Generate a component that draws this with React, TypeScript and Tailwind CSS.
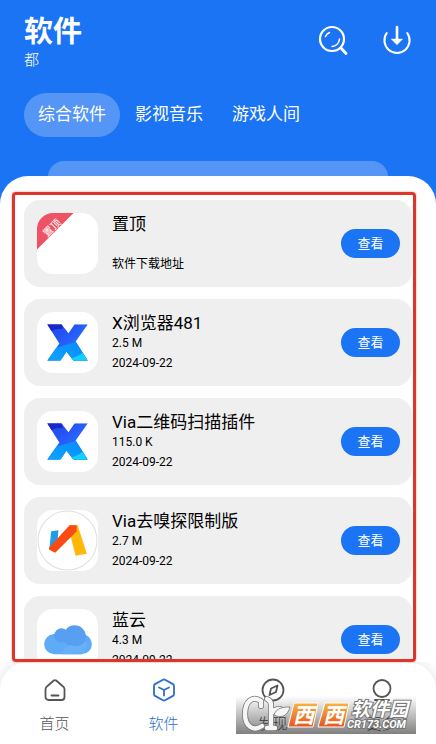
import React, { useState } from 'react';
import clsx from 'clsx';

interface AppItem {
    name: string;
    size?: string;
    note: string;
    icon: React.ReactNode;
}

const XBrowserIcon = ({ id }: { id: string }) => (
    <svg viewBox="0 0 60 60" className="w-full h-full" aria-hidden="true">
        <defs>
            <linearGradient id={`${id}-top`} x1="0" y1="0" x2="1" y2="1">
                <stop offset="0.3" stopColor="#2350f2" />
                <stop offset="0.6" stopColor="#2a68ff" />
                <stop offset="1" stopColor="#2043dc" />
            </linearGradient>
            <linearGradient id={`${id}-bottom`} x1="0" y1="1" x2="1" y2="0">
                <stop offset="0" stopColor="#0ba8ff" />
                <stop offset="1" stopColor="#0a84fa" />
            </linearGradient>
            <clipPath id={`${id}-clip`}>
                <path d="M10 12h14l7 9 6-9h13L38 29l12 19H36l-7-9-6 9H10l12-17z" />
            </clipPath>
        </defs>
        <g clipPath={`url(#${id}-clip)`}>
            <path d="M8 10h44v40H8z" fill={`url(#${id}-top)`} />
            <path d="M8 10h17v7c-4-1-9 0-13 3z" fill="#1b28c6" />
            <path d="M8 35h12c7-3 14-3 22-8l12 23H8z" fill={`url(#${id}-bottom)`} />
            <path d="M33 46c5-2 8-3 12-6l7 10H33z" fill="#12cffd" />
        </g>
    </svg>
);

const ViaIcon = () => (
    <svg viewBox="0 0 60 60" className="w-full h-full" aria-hidden="true">
        <circle cx="30" cy="30" r="29" fill="#fff" stroke="#dedede" />
        <path d="M14 21l7-1-1 14-8 5z" fill="#1c9fe8" />
        <path d="M32 15h8l9 28-11 2-7-27z" fill="#ffb70a" />
        <path d="M12 37l20-22h7v6L18 42l-6-3z" fill="#fb4a13" />
    </svg>
);

const CloudIcon = () => (
    <svg viewBox="0 0 60 60" className="w-full h-full" aria-hidden="true">
        <path d="M17 44.500a10 10 0 0 1 0-20h27a10 10 0 0 1 0 20z" fill="#5fabf6" />
        <circle cx="24" cy="26" r="7" fill="#579ff0" />
        <circle cx="37" cy="27" r="11" fill="#579ff0" />
        <path d="M25 44.500a11 11 0 0 1 8-9c6 2 11 1 15-4a11 11 0 0 1-4 13z" fill="#68b1f9" />
    </svg>
);

const PinnedRibbon = () => (
    <svg viewBox="0 0 60 60" className="w-full h-full" aria-hidden="true">
        <path d="M0 0h36L0 36z" fill="#ee5264" />
        <text x="15" y="18" transform="rotate(-45 15 15)" textAnchor="middle" fontSize="10" fill="#fff">置顶</text>
    </svg>
);

const SearchIcon = () => (
    <svg viewBox="0 0 28 28" className="size-7 overflow-visible" fill="none" stroke="currentColor" strokeLinecap="round" aria-hidden="true">
        <circle cx="13" cy="13" r="12" strokeWidth="2.200" />
        <path d="M22 22l5 5.500" strokeWidth="2.800" />
        <path d="M6.500 10.500a7 7 0 0 1 4-4M20.500 13a8 8 0 0 1-7.500 7.500" strokeWidth="1.500" />
    </svg>
);

const DownloadIcon = () => (
    <svg viewBox="0 0 30 28" className="w-7 h-7 overflow-visible" fill="none" stroke="currentColor" strokeLinecap="round" aria-hidden="true">
        <path d="M4 6.500a13.500 13.500 0 1 0 22 0" strokeWidth="2.200" />
        <path d="M15 0v14" strokeWidth="2.800" />
        <path d="M9 13h12l-6 6z" fill="currentColor" strokeWidth="0.500" />
    </svg>
);

const navIcons = {
    home: (
        <>
            <path d="M4.500 8L10.800 2.500a2 2 0 0 1 2.400 0L19.500 8a4 4 0 0 1 2 3v8a3 3 0 0 1-3 3h-13a3 3 0 0 1-3-3v-8a4 4 0 0 1 2-3z" />
            <path d="M8.500 17.500h7" />
        </>
    ),
    box: (
        <>
            <path d="M11 1.700a2 2 0 0 1 2 0l8 4.400a2 2 0 0 1 1 1.700v8.400a2 2 0 0 1-1 1.700L13 22.300a2 2 0 0 1-2 0l-8-4.400a2 2 0 0 1-1-1.700V7.800a2 2 0 0 1 1-1.700z" />
            <path d="M7 9.500l5 2.500 5-2.500M12 12v5.500" />
        </>
    ),
    compass: (
        <>
            <circle cx="12" cy="12" r="10.500" />
            <path d="M16.500 7.500l-1.500 6.500-6.500 3 1.500-6.500z" />
        </>
    ),
    user: (
        <>
            <circle cx="12" cy="10.500" r="8.500" />
            <path d="M5 22h14" />
        </>
    )
};

const apps: AppItem[] = [
    { name: '置顶', note: '软件下载地址', icon: <PinnedRibbon /> },
    { name: 'X浏览器481', size: '2.5 M', note: '2024-09-22', icon: <XBrowserIcon id="xb" /> },
    { name: 'Via二维码扫描插件', size: '115.0 K', note: '2024-09-22', icon: <XBrowserIcon id="scan" /> },
    { name: 'Via去嗅探限制版', size: '2.7 M', note: '2024-09-22', icon: <ViaIcon /> },
    { name: '蓝云', size: '4.3 M', note: '2024-09-22', icon: <CloudIcon /> }
];

const tabs = ['综合软件', '影视音乐', '游戏人间'];

const navItems = [
    { label: '首页', icon: navIcons.home },
    { label: '软件', icon: navIcons.box },
    { label: '发现', icon: navIcons.compass },
    { label: '更多', icon: navIcons.user }
];

const AppCard = ({ app }: { app: AppItem }) => (
    <li className="flex h-[87px] shrink-0 rounded-2xl bg-[#efefef] px-3">
        <div className="mt-[13px] ml-px size-[61px] shrink-0 overflow-hidden rounded-2xl bg-white">
            {app.icon}
        </div>
        <div className="ml-3.5 min-w-0 flex-1 pt-3 text-xs leading-5 text-black">
            <h2 className="truncate text-[17px] leading-6">{app.name}</h2>
            <p className="-mt-0.5 h-5">{app.size}</p>
            <p>{app.note}</p>
        </div>
        <button type="button" className="h-[29px] w-[59px] shrink-0 self-center rounded-full bg-[#1b74f3] text-[13px] text-white">
            查看
        </button>
    </li>
);

const Watermark = () => (
    <div className="pointer-events-none absolute right-5 bottom-2.5 h-[38px] w-[180px] bg-linear-to-b from-black/0 to-black/50">
        <svg viewBox="0 0 180 38" className="h-full w-full overflow-visible">
            <defs>
                <linearGradient id="tile" x1="0" y1="0" x2="0" y2="1">
                    <stop offset="0" stopColor="#f5b544" />
                    <stop offset="1" stopColor="#e8551c" />
                </linearGradient>
            </defs>
            {/* Cr leaf mark */}
            <g fill="none" strokeLinecap="round" strokeLinejoin="round">
                <g stroke="#777" strokeWidth="6">
                    <path d="M25 10V5C16-1 9 6 9 18c0 12 8 18 17 12" />
                    <path d="M31 3c3 1 4 3 4 6v22M31 32h8M35 18c2-4 5-5 9-5" />
                </g>
                <g stroke="#f6f6f6" strokeWidth="4.400">
                    <path d="M25 10V5C16-1 9 6 9 18c0 12 8 18 17 12" />
                    <path d="M31 3c3 1 4 3 4 6v22M31 32h8M35 18c2-4 5-5 9-5" />
                </g>
            </g>
            <path d="M38 19c2-7 9-8 16-8-2 8-8 12-16 8z" fill="#f6f6f6" stroke="#777" strokeWidth="0.800" />
            <path d="M58 7h24l-5 24H52zM89 7h24l-5 24H82z" fill="url(#tile)" stroke="#fff" />
            <g fontWeight="700" fontStyle="italic" fill="#fff">
                <text x="57" y="27" fontSize="21">西</text>
                <text x="87" y="27" fontSize="21">西</text>
                <g stroke="#777" strokeWidth="2" paintOrder="stroke">
                    <text x="115" y="20" fontSize="19">软件园</text>
                    <text x="111" y="32" fontSize="11">CR173.COM</text>
                </g>
            </g>
        </svg>
    </div>
);

export default function App() {
    const [activeTab, setActiveTab] = useState(0);

    return (
        <div className="flex h-screen flex-col overflow-hidden bg-[#1b74f3] font-['Roboto','Noto_Sans_CJK_SC',sans-serif]">
            <header className="shrink-0 pt-3.5 text-white">
                <div className="flex justify-between px-6">
                    <div>
                        <h1 className="text-[29px] leading-9 font-bold">软件</h1>
                        <p className="text-[15px] leading-5 font-light">都</p>
                    </div>
                    <div className="flex items-start gap-9 pt-3 pr-px">
                        <button type="button" aria-label="搜索"><SearchIcon /></button>
                        <button type="button" aria-label="下载"><DownloadIcon /></button>
                    </div>
                </div>
                <div className="mt-[23px] flex gap-px px-6">
                    {tabs.map((tab, i) => (
                        <button
                            key={tab}
                            type="button"
                            onClick={() => setActiveTab(i)}
                            className={clsx('h-11 rounded-full px-3.5 text-[17px]', i === activeTab && 'bg-[#5495f6]')}
                        >
                            {tab}
                        </button>
                    ))}
                </div>
                <div className="mx-12 mt-6 h-4 rounded-t-2xl bg-[#5495f6]" />
            </header>

            <main className="relative z-10 -mt-px flex min-h-0 flex-1 flex-col rounded-t-[28px] bg-white pt-6">
                <ul className="flex min-h-0 flex-1 flex-col gap-3 overflow-hidden px-6">
                    {apps.map(app => <AppCard key={app.name} app={app} />)}
                </ul>
                {/* Highlight frame around the list */}
                <div className="pointer-events-none absolute top-4 right-5 bottom-0 left-3 rounded-[4px] border-3 border-[#dd342b] shadow-[0_0_2px_#f08078]" />
            </main>

            <div className="relative shrink-0 bg-white">
                <nav className="grid h-[82px] grid-cols-4 rounded-t-[28px] bg-white shadow-[0_0_14px_rgba(0,0,0,0.12)]">
                    {navItems.map((item, i) => (
                        <a
                            key={item.label}
                            href="#"
                            className={clsx('flex flex-col items-center gap-3 pt-4 text-[15px] leading-5 font-light', i === 1 ? 'text-[#2b6fc8]' : 'text-[#555]')}
                        >
                            <svg viewBox="0 0 24 24" className="size-6" fill="none" stroke="currentColor" strokeWidth="1.800" strokeLinecap="round" strokeLinejoin="round" aria-hidden="true">
                                {item.icon}
                            </svg>
                            {item.label}
                        </a>
                    ))}
                </nav>
                <Watermark />
            </div>
        </div>
    );
}
